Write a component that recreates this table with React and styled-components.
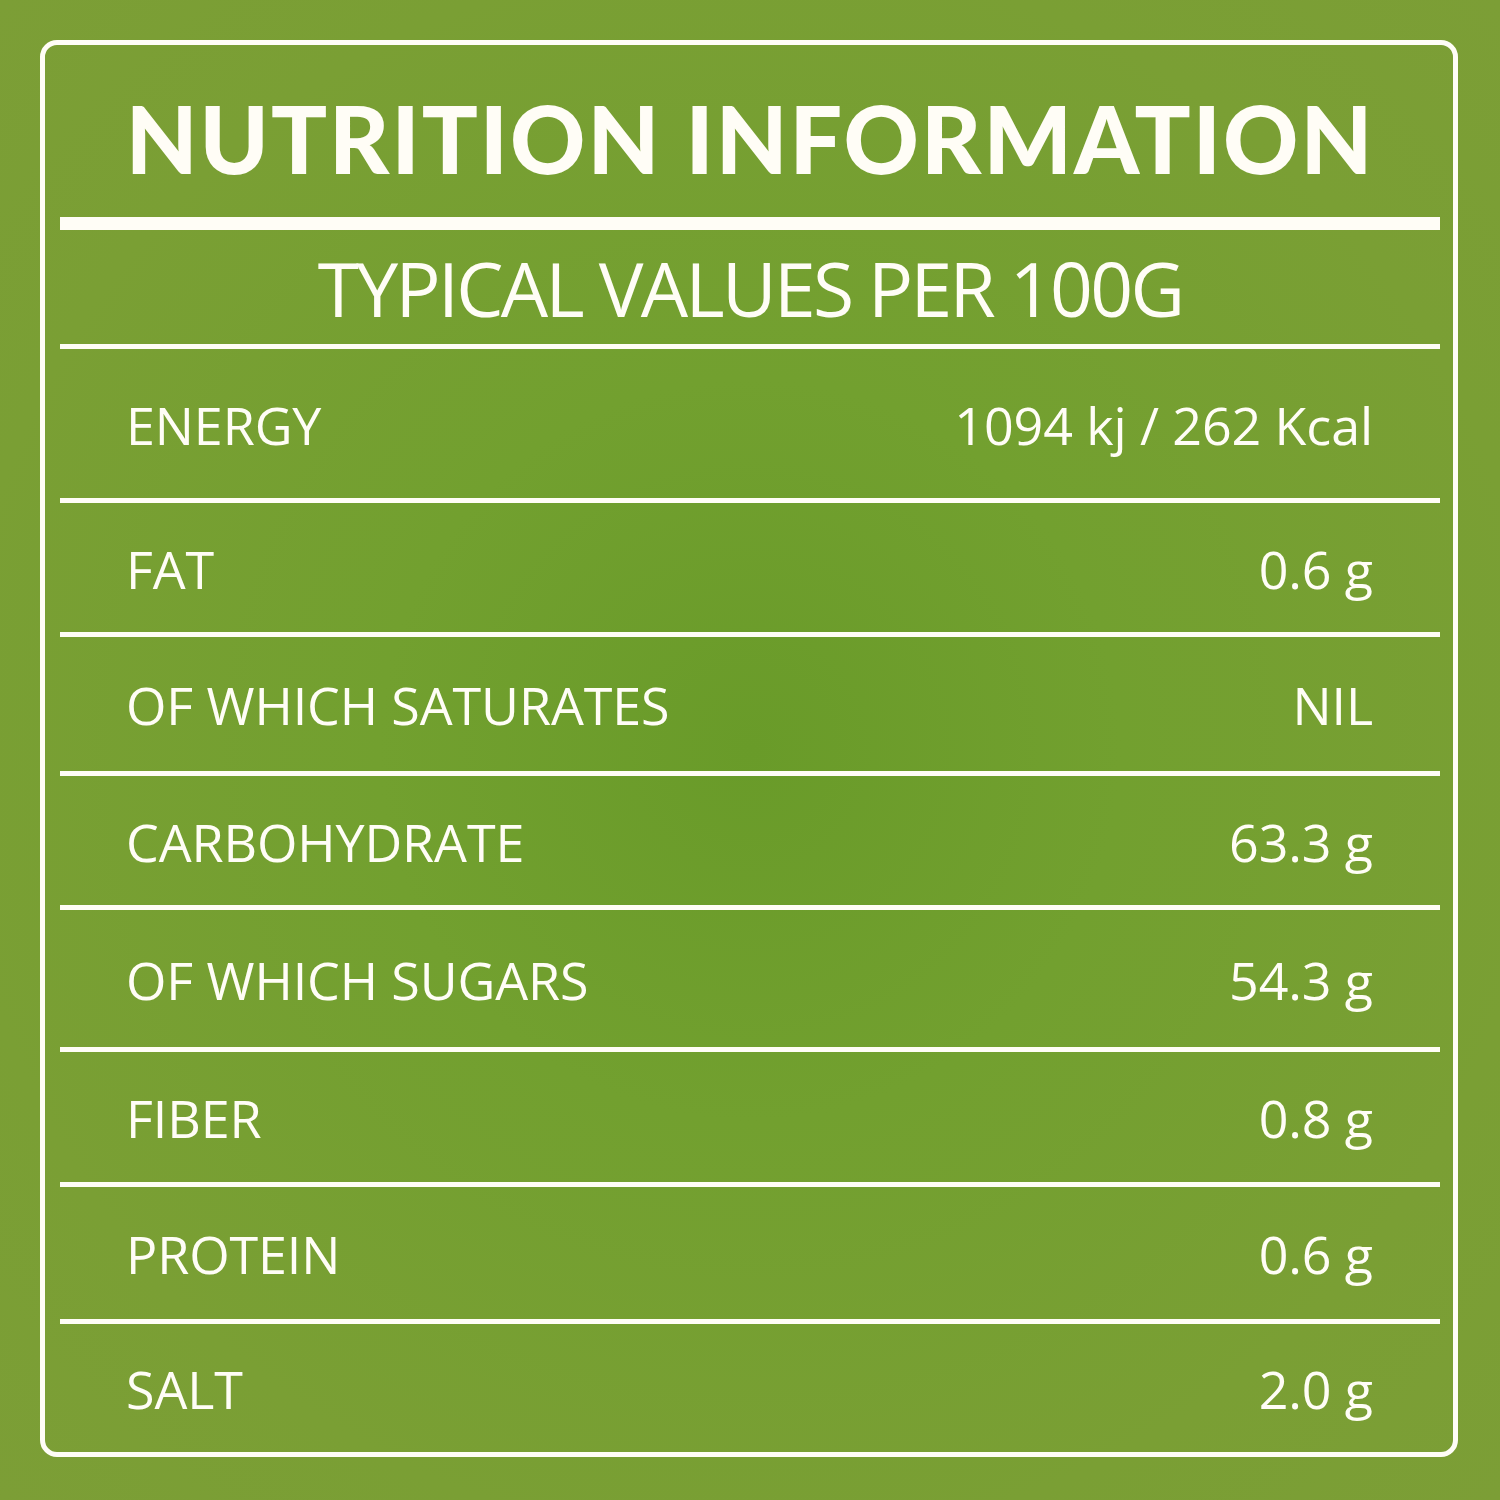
import React from "react";
import styled, { createGlobalStyle } from "styled-components";

const Global = createGlobalStyle`
  html, body { margin: 0; padding: 0; }
  body {
    width: 1500px;
    height: 1500px;
    overflow: hidden;
    background: radial-gradient(circle at 50% 50%, #699b29 0%, #72a02f 35%, #7a9f34 75%, #7c9e36 100%);
  }
`;

const Page = styled.div`
  width: 1500px;
  height: 1500px;
  box-sizing: border-box;
  padding: 40px 42px 43px 40px;
  display: flex;
  font-family: "Open Sans", "Noto Sans", sans-serif;
  color: #fffdf6;
`;

const Card = styled.div`
  flex: 1;
  box-sizing: border-box;
  border: 5px solid #fffdf6;
  border-radius: 17px;
  padding: 0 13px 0 15px;
  display: flex;
  flex-direction: column;
`;

const Title = styled.h1`
  margin: 0;
  height: 172px;
  display: flex;
  align-items: center;
  justify-content: center;
  padding-top: 14px;
  box-sizing: border-box;
  font-family: "Lato", sans-serif;
  font-weight: 900;
  font-size: 93px;
  line-height: 1;
  letter-spacing: 2px;
`;

const Rule = styled.div`
  height: ${(p) => p.$thick}px;
  background: #fffdf6;
  flex: none;
`;

const Subtitle = styled.h2`
  margin: 0;
  height: 114px;
  display: flex;
  align-items: center;
  justify-content: center;
  padding-top: 3px;
  box-sizing: border-box;
  font-weight: 400;
  font-size: 75px;
  line-height: 1;
  letter-spacing: -2.7px;
`;

const Row = styled.div`
  display: flex;
  align-items: center;
  justify-content: space-between;
  padding: 2px 67px 0 66px;
  box-sizing: border-box;
  font-size: 52px;
  line-height: 1;
  letter-spacing: -0.1px;
`;

const Label = styled.span``;
const Value = styled.span``;

const rows = [
  { label: "ENERGY", value: "1094 kj / 262 Kcal", h: 149 },
  { label: "FAT", value: "0.6 g", h: 129 },
  { label: "OF WHICH SATURATES", value: "NIL", h: 134 },
  { label: "CARBOHYDRATE", value: "63.3 g", h: 129 },
  { label: "OF WHICH SUGARS", value: "54.3 g", h: 137 },
  { label: "FIBER", value: "0.8 g", h: 130 },
  { label: "PROTEIN", value: "0.6 g", h: 132 },
  { label: "SALT", value: "2.0 g", h: 0 },
];

export default function App() {
  return (
    <>
      <Global />
      <Page>
        <Card>
          <Title>NUTRITION INFORMATION</Title>
          <Rule $thick={13} />
          <Subtitle>TYPICAL VALUES PER 100G</Subtitle>
          <Rule $thick={5} />
          {rows.map((r, i) => (
            <React.Fragment key={r.label}>
              <Row style={r.h ? { height: r.h } : { flex: 1 }}>
                <Label>{r.label}</Label>
                <Value>{r.value}</Value>
              </Row>
              {i < rows.length - 1 && <Rule $thick={5} />}
            </React.Fragment>
          ))}
        </Card>
      </Page>
    </>
  );
}
